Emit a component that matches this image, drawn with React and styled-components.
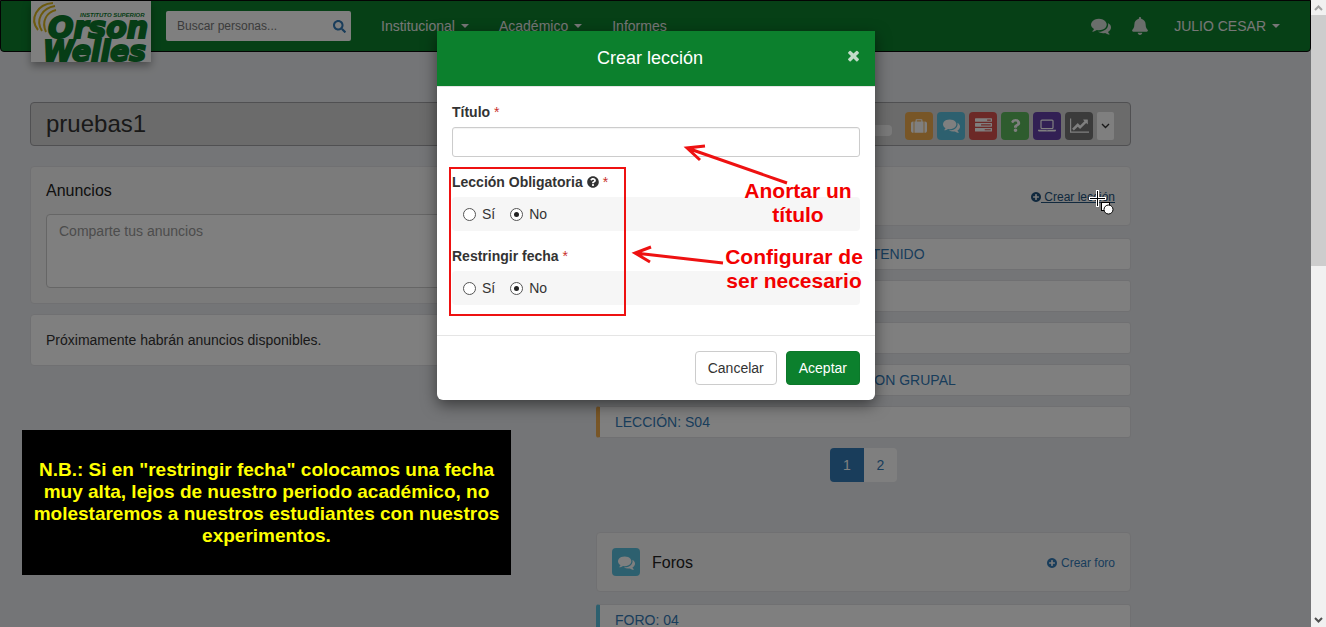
import React from "react";
import styled, { createGlobalStyle } from "styled-components";
import { FaBell, FaSearch, FaQuestion, FaQuestionCircle } from "react-icons/fa";

const GlobalStyle = createGlobalStyle`
  *, *::before, *::after { box-sizing: border-box; }
  body {
    margin: 0;
    background: #e9ebee;
    color: #333;
    font: 14px/20px "Liberation Sans", Arial, sans-serif;
  }
  button, input, textarea { font: inherit; }
  a { color: #337ab7; text-decoration: none; }
  h1, h2, h3, p, ul { margin: 0; padding: 0; }
  h1, h2, h3 { font-weight: normal; }
  ul { list-style: none; }
`;

/* ---------- icons ---------- */

const ICONS = {
  comments: {
    box: "0 0 1792 1792",
    d: "M1408 768q0 139-94 257t-256.5 186.5-353.5 68.5q-86 0-176-16-124 88-278 128-36 9-86 16h-3q-11 0-20.5-8t-11.5-21q-1-3-1-6.5t.5-6.5 2-6l2.5-5 3.5-5.5 4-5 4.5-5 4-4.5q5-6 23-25t26-29.5 22.5-29 25-38.5 20.5-44q-124-72-195-177t-71-224q0-139 94-257t256.5-186.5 353.5-68.5 353.5 68.5 256.5 186.5 94 257zm384 256q0 120-71 224.5t-195 176.5q10 24 20.5 44t25 38.5 22.5 29 26 29.5 23 25q1 1 4 4.5t4.5 5 4 5 3.5 5.5l2.5 5 2 6 .5 6.5-1 6.5q-3 14-13 22t-22 7q-50-7-86-16-154-40-278-128-90 16-176 16-271 0-472-132 58 4 88 4 161 0 309-45t264-129q125-92 192-212t67-254q0-77-23-152 129 71 204 178t75 230z",
  },
  suitcase: {
    box: "0 0 1792 1792",
    d: "M640 384h512v-128h-512v128zm-352 0v1280h-64q-92 0-158-66t-66-158v-832q0-92 66-158t158-66h64zm1120 0v1280h-1024v-1280h128v-160q0-40 28-68t68-28h576q40 0 68 28t28 68v160h128zm384 224v832q0 92-66 158t-158 66h-64v-1280h64q92 0 158 66t66 158z",
  },
  tasks: {
    box: "0 0 1792 1792",
    d: "M1024 1408h640v-128h-640v128zm-384-512h1024v-128h-1024v128zm640-512h384v-128h-384v128zm512 832v256q0 26-19 45t-45 19h-1664q-26 0-45-19t-19-45v-256q0-26 19-45t45-19h1664q26 0 45 19t19 45zm0-512v256q0 26-19 45t-45 19h-1664q-26 0-45-19t-19-45v-256q0-26 19-45t45-19h1664q26 0 45 19t19 45zm0-512v256q0 26-19 45t-45 19h-1664q-26 0-45-19t-19-45v-256q0-26 19-45t45-19h1664q26 0 45 19t19 45z",
  },
  laptop: {
    box: "0 0 1920 1792",
    d: "M416 1280q-66 0-113-47t-47-113v-704q0-66 47-113t113-47h1088q66 0 113 47t47 113v704q0 66-47 113t-113 47h-1088zm-32-864v704q0 13 9.5 22.5t22.5 9.5h1088q13 0 22.5-9.5t9.5-22.5v-704q0-13-9.5-22.5t-22.5-9.5h-1088q-13 0-22.5 9.5t-9.5 22.5zm1376 928h160v96q0 40-47 68t-113 28h-1600q-66 0-113-28t-47-68v-96h1760zm-720 96q16 0 16-16t-16-16h-160q-16 0-16 16t16 16h160z",
  },
  chart: {
    box: "0 0 2048 1792",
    d: "M2048 1536v128h-2048v-1536h128v1408h1920zm-128-1248v435q0 21-19.5 29.5t-35.5-7.5l-121-121-633 633q-10 10-23 10t-23-10l-233-233-416 416-192-192 585-585q10-10 23-10t23 10l233 233 464-464-121-121q-16-16-7.5-35.5t29.5-19.5h435q14 0 23 9t9 23z",
  },
  plus: {
    box: "0 128 1536 1536",
    d: "M1216 960v-128q0-26-19-45t-45-19h-256v-256q0-26-19-45t-45-19h-128q-26 0-45 19t-19 45v256h-256q-26 0-45 19t-19 45v128q0 26 19 45t45 19h256v256q0 26 19 45t45 19h128q26 0 45-19t19-45v-256h256q26 0 45-19t19-45zm320-64q0 209-103 385.5t-279.5 279.5-385.5 103-385.5-103-279.5-279.5-103-385.5 103-385.5 279.5-279.5 385.5-103 385.5 103 279.5 279.5 103 385.5z",
  },
  times: {
    box: "296 296 1200 1200",
    d: "M1490 1322q0 40-28 68l-136 136q-28 28-68 28t-68-28l-294-294-294 294q-28 28-68 28t-68-28l-136-136q-28-28-28-68t28-68l294-294-294-294q-28-28-28-68t28-68l136-136q28-28 68-28t68 28l294 294 294-294q28-28 68-28t68 28l136 136q28 28 28 68t-28 68l-294 294 294 294q28 28 28 68z",
  },
};

function Icon({ name, size, width }) {
  const { box, d } = ICONS[name];
  return (
    <svg width={width || size} height={size} viewBox={box} fill="currentColor" overflow="visible" aria-hidden="true">
      <path d={d} />
    </svg>
  );
}

/* ---------- window frame ---------- */

const Frame = styled.div`
  display: grid;
  grid-template-columns: minmax(0, 1fr) 15px;
  height: 100vh;
  overflow: hidden;
`;

const Screen = styled.div`
  position: relative;
  min-width: 0;
  height: 100vh;
  overflow: hidden;
`;

const Scrollbar = styled.div`
  display: flex;
  flex-direction: column;
  background: #f1f1f1;
`;

const ScrollArrow = styled.button`
  display: flex;
  align-items: center;
  justify-content: center;
  height: 15px;
  padding: 0;
  border: 0;
  background: #f1f1f1;
  color: ${(p) => (p.$muted ? "#a3a3a3" : "#505050")};
`;

const ScrollTrack = styled.div`
  flex: 1;
`;

const ScrollThumb = styled.div`
  height: 42%;
  background: #cdcdcd;
`;

/* ---------- top navigation ---------- */

const Navbar = styled.nav`
  display: flex;
  align-items: flex-start;
  height: 52px;
  padding: 0 15px 0 29px;
  border: 1px solid #080808;
  border-radius: 0 0 4px 4px;
  background: #0c802d;
`;

const LogoLink = styled.a`
  display: block;
  height: 61px;
  margin-left: 1px;
  background: #fff;
  box-shadow: 0 4px 8px rgba(0, 0, 0, 0.35);
  svg { display: block; }
`;

const SearchForm = styled.form`
  display: flex;
  align-items: center;
  width: 185px;
  height: 30px;
  margin: 10px 15px 0;
  padding: 0 5px 0 11px;
  border-radius: 2px;
  background: #fff;
`;

const SearchInput = styled.input`
  flex: 1;
  min-width: 0;
  padding: 0;
  border: 0;
  outline: 0;
  background: none;
  font-size: 12px;
  &::placeholder { color: #777; opacity: 1; }
`;

const SearchButton = styled.button`
  display: flex;
  padding: 0;
  border: 0;
  background: none;
  color: #337ab7;
`;

const Menu = styled.ul`
  display: flex;
  align-items: center;
  height: 50px;
  margin-left: ${(p) => (p.$end ? "auto" : "0")};
`;

const MenuLink = styled.a`
  display: flex;
  align-items: center;
  gap: 6px;
  padding: 0 ${(p) => (p.$icon ? 10 : 15)}px;
  color: ${(p) => (p.$icon ? "#d5dcd6" : "#eee")};
`;

const Caret = styled.span`
  border: 4px solid transparent;
  border-top-color: currentColor;
  border-bottom: 0;
`;

/* ---------- course page ---------- */

const Page = styled.main`
  max-width: 1161px;
  padding: 50px 30px 0;
`;

const CourseBar = styled.header`
  display: flex;
  align-items: center;
  gap: 4px;
  height: 44px;
  padding: 3px 16px 0 15px;
  border: 1px solid #a0a0a4;
  border-radius: 4px;
  background: #d6d6d6;
`;

const CourseTitle = styled.h1`
  flex: 1;
  padding-bottom: 3px;
  font-size: 24px;
  line-height: 26px;
`;

const Progress = styled.div`
  width: 160px;
  height: 11px;
  margin: 10px 9px 0 0;
  border-radius: 4px;
  background: #f5f5f5;
`;

const Tile = styled.button`
  display: flex;
  flex: none;
  align-items: center;
  justify-content: center;
  width: 28px;
  height: 28px;
  padding: 0;
  border: 0;
  border-radius: 4px;
  background: ${(p) => p.$color};
  color: #fff;
`;

const MoreButton = styled(Tile)`
  width: 17px;
  border-radius: 2px;
  background: #fff;
  color: #333;
`;

const Columns = styled.div`
  display: grid;
  grid-template-columns: 1fr 1fr;
  gap: 31px;
  margin-top: 20px;
`;

const Column = styled.div`
  display: flex;
  flex-direction: column;
  gap: ${(p) => p.$gap}px;
  min-width: 0;
`;

const Card = styled.section`
  padding: 15px;
  border: 1px solid #e0e1e4;
  border-radius: 4px;
  background: ${(p) => (p.$plain ? "#fff" : "#f6f6f6")};
`;

const CardTitle = styled.h2`
  flex: 1;
  color: #222;
  font-size: 16px;
  line-height: 18px;
`;

const Composer = styled.textarea`
  display: block;
  width: 100%;
  height: 74px;
  margin-top: 14px;
  padding: 6px 12px;
  border: 1px solid #ccc;
  border-radius: 4px;
  background: #fff;
  resize: none;
  &::placeholder { color: #999; opacity: 1; }
`;

const SectionHead = styled(Card)`
  display: flex;
  align-items: center;
  gap: 12px;
  height: 60px;
  ${CardTitle} { padding-top: 2px; }
`;

const CreateLink = styled.a`
  display: flex;
  align-items: center;
  gap: ${(p) => (p.$hover ? 0 : 4)}px;
  padding-top: 2px;
  font-size: 12px;
  white-space: pre;
  color: ${(p) => (p.$hover ? "#23527c" : "#337ab7")};
  span { text-decoration: ${(p) => (p.$hover ? "underline" : "none")}; }
`;

const ItemList = styled.ul`
  display: flex;
  flex-direction: column;
  gap: 10px;
`;

const Item = styled.li`
  padding: 5px 15px;
  border: 1px solid #e0e1e4;
  border-left: 4px solid ${(p) => p.$color};
  border-radius: 3px;
  background: #fff;
`;

const Pager = styled.nav`
  display: flex;
  justify-content: center;
  margin: -2px 0 38px;
`;

const PageLink = styled.a`
  width: ${(p) => (p.$active ? 34 : 33)}px;
  padding: 7px 0;
  text-align: center;
  border-radius: ${(p) => (p.$active ? "4px 0 0 4px" : "0 4px 4px 0")};
  background: ${(p) => (p.$active ? "#337ab7" : "#fff")};
  color: ${(p) => (p.$active ? "#fff" : "#337ab7")};
`;

/* ---------- dialog ---------- */

const Backdrop = styled.div`
  position: absolute;
  inset: 0;
  display: flex;
  align-items: flex-start;
  justify-content: center;
  padding: 31px 15px 0 16px;
  background: rgba(0, 0, 0, 0.5);
`;

const Dialog = styled.div`
  position: relative;
  width: 438px;
  border-radius: 0 0 6px 6px;
  background: #fff;
  box-shadow: 0 5px 15px rgba(0, 0, 0, 0.5);
`;

const DialogHead = styled.header`
  display: flex;
  align-items: flex-start;
  padding: 15px;
  border-bottom: 1px solid #e5e5e5;
  background: #0c802d;
`;

const DialogTitle = styled.h2`
  flex: 1;
  color: #fff;
  font-size: 18px;
  line-height: 25px;
  text-align: center;
`;

const CloseButton = styled.button`
  display: flex;
  align-items: center;
  height: 18px;
  padding: 0 1px 0 0;
  border: 0;
  background: none;
  color: #c2dcc9;
`;

const DialogBody = styled.form`
  display: flex;
  flex-direction: column;
  gap: 15px;
  padding: 15px 15px 30px;
`;

const Field = styled.fieldset`
  display: flex;
  flex-direction: column;
  gap: 5px;
  min-width: 0;
  margin: 0;
  padding: 0;
  border: 0;
`;

const FieldLabel = styled.label`
  display: flex;
  align-items: center;
  gap: 4px;
  font-weight: bold;
`;

const Required = styled.span`
  color: #c9302c;
  font-weight: normal;
`;

const TextInput = styled.input`
  width: 100%;
  height: 30px;
  padding: 5px 10px;
  border: 1px solid #ccc;
  border-radius: 3px;
  background: #fff;
  box-shadow: inset 0 1px 1px rgba(0, 0, 0, 0.05);
`;

const Options = styled.div`
  display: flex;
  gap: 15px;
  padding: 7px 11px;
  border-radius: 4px;
  background: #f6f6f6;
`;

const Option = styled.label`
  display: flex;
  align-items: center;
  gap: 6px;
`;

const Radio = styled.input`
  appearance: none;
  display: grid;
  place-items: center;
  width: 13px;
  height: 13px;
  margin: 0;
  border: 1px solid #555;
  border-radius: 50%;
  background: #fff;
  &:checked::before {
    content: "";
    width: 5px;
    height: 5px;
    border-radius: 50%;
    background: #222;
  }
`;

const DialogFoot = styled.footer`
  display: flex;
  justify-content: flex-end;
  gap: 9px;
  padding: 15px;
  border-top: 1px solid #e5e5e5;
`;

const Button = styled.button`
  padding: 6px 12px;
  border: 1px solid ${(p) => (p.$primary ? "#0c782a" : "#ccc")};
  border-radius: 4px;
  background: ${(p) => (p.$primary ? "#0c802d" : "#fff")};
  color: ${(p) => (p.$primary ? "#fff" : "#333")};
`;

/* ---------- tutorial marks over the dialog and page ---------- */

const MarkFrame = styled.div`
  position: absolute;
  left: 12px;
  top: 136px;
  width: 177px;
  height: 149px;
  border: 2px solid #ee1111;
`;

const MarkText = styled.p`
  position: absolute;
  left: ${(p) => p.$x}px;
  top: ${(p) => p.$y}px;
  width: 144px;
  color: #f20000;
  font-size: 21px;
  font-weight: bold;
  line-height: 24px;
  text-align: center;
`;

const MarkArrows = styled.svg`
  position: absolute;
  left: 0;
  top: 0;
  pointer-events: none;
`;

const NoteBox = styled.aside`
  position: absolute;
  left: 22px;
  top: 430px;
  display: flex;
  align-items: center;
  justify-content: center;
  width: 489px;
  height: 145px;
  background: #000;
  color: #ff0;
  font-size: 19px;
  font-weight: bold;
  line-height: 22px;
  text-align: center;
  white-space: nowrap;
`;

const Pointer = styled.svg`
  position: absolute;
  left: 1088px;
  top: 189px;
`;

/* ---------- parts ---------- */

function Logo() {
  return (
    <svg width="120" height="61" viewBox="0 0 120 61" overflow="visible" role="img" aria-label="Instituto Superior Orson Welles">
      <g fill="none" stroke="#d9b51c" strokeWidth="2">
        <path d="M22 2C6 3 -2 18 7 29" />
        <path d="M24 5C11 7 4 19 11 30" />
        <path d="M25 9C16 11 10 20 15 31" />
      </g>
      <g fill="#0c7a2d" stroke="#0c7a2d" fontStyle="italic" fontWeight="bold">
        <text x="49" y="16" fontSize="6" strokeWidth="0" fontFamily="'Liberation Sans', Arial, sans-serif">
          INSTITUTO SUPERIOR
        </text>
        <text x="17" y="37" fontSize="30" strokeWidth="2" fontFamily="'DejaVu Sans', sans-serif">Orson</text>
        <text x="12" y="60" fontSize="28" strokeWidth="2" fontFamily="'DejaVu Sans', sans-serif">Welles</text>
      </g>
    </svg>
  );
}

const TILES = [
  { label: "Lecciones", color: "#f0ad4e", icon: <Icon name="suitcase" size={16} /> },
  { label: "Foros", color: "#5bc0de", icon: <Icon name="comments" size={17} /> },
  { label: "Tareas", color: "#d9534f", icon: <Icon name="tasks" size={17} /> },
  { label: "Evaluaciones", color: "#5cb85c", icon: <FaQuestion size={13} /> },
  { label: "Clases virtuales", color: "#6540a8", icon: <Icon name="laptop" size={17} width={18} /> },
  { label: "Estadísticas", color: "#777", icon: <Icon name="chart" size={17} width={19} /> },
];

const LESSONS = [
  "LECCIÓN: 1 PRESENTACIÓN DEL CONTENIDO",
  "LECCIÓN: S01",
  "LECCIÓN: S02",
  "LECCIÓN: S03 TRABAJO: PRESENTACION GRUPAL",
  "LECCIÓN: S04",
];

function YesNo({ name }) {
  return (
    <Options>
      <Option><Radio type="radio" name={name} value="si" />Sí</Option>
      <Option><Radio type="radio" name={name} value="no" defaultChecked />No</Option>
    </Options>
  );
}

function LessonDialog() {
  return (
    <Dialog role="dialog" aria-labelledby="dialog-title">
      <DialogHead>
        <DialogTitle id="dialog-title">Crear lección</DialogTitle>
        <CloseButton aria-label="Cerrar"><Icon name="times" size={11} /></CloseButton>
      </DialogHead>
      <DialogBody>
        <Field>
          <FieldLabel htmlFor="titulo">Título <Required>*</Required></FieldLabel>
          <TextInput id="titulo" type="text" />
        </Field>
        <Field aria-labelledby="obligatoria-label">
          <FieldLabel as="span" id="obligatoria-label">
            Lección Obligatoria <FaQuestionCircle size={12} /> <Required>*</Required>
          </FieldLabel>
          <YesNo name="obligatoria" />
        </Field>
        <Field aria-labelledby="restringir-label">
          <FieldLabel as="span" id="restringir-label">Restringir fecha <Required>*</Required></FieldLabel>
          <YesNo name="restringir" />
        </Field>
      </DialogBody>
      <DialogFoot>
        <Button type="button">Cancelar</Button>
        <Button type="button" $primary>Aceptar</Button>
      </DialogFoot>

      <MarkFrame />
      <MarkArrows width="438" height="369" fill="none" stroke="#ee1111" strokeWidth="3">
        <path d="M350 152L250 117M268 115L250 117L263 129" />
        <path d="M286 232L198 222M214 216L198 222L213 231" />
      </MarkArrows>
      <MarkText $x={289} $y={148}>Anortar un<br />título</MarkText>
      <MarkText $x={285} $y={214}>Configurar de<br />ser necesario</MarkText>
    </Dialog>
  );
}

export default function App() {
  return (
    <Frame>
      <GlobalStyle />
      <Screen>
        <Navbar>
          <LogoLink href="#"><Logo /></LogoLink>
          <SearchForm>
            <SearchInput type="search" aria-label="Buscar personas" placeholder="Buscar personas..." />
            <SearchButton type="button" aria-label="Buscar"><FaSearch size={13} /></SearchButton>
          </SearchForm>
          <Menu>
            <li><MenuLink href="#">Institucional<Caret /></MenuLink></li>
            <li><MenuLink href="#">Académico<Caret /></MenuLink></li>
            <li><MenuLink href="#">Informes</MenuLink></li>
          </Menu>
          <Menu $end>
            <li><MenuLink href="#" $icon aria-label="Mensajes"><Icon name="comments" size={20} /></MenuLink></li>
            <li><MenuLink href="#" $icon aria-label="Avisos"><FaBell size={18} /></MenuLink></li>
            <li><MenuLink href="#">JULIO CESAR<Caret /></MenuLink></li>
          </Menu>
        </Navbar>

        <Page>
          <CourseBar>
            <CourseTitle>pruebas1</CourseTitle>
            <Progress />
            {TILES.map((t) => (
              <Tile key={t.label} $color={t.color} aria-label={t.label}>{t.icon}</Tile>
            ))}
            <MoreButton aria-label="Más opciones">
              <svg width="9" height="6" viewBox="0 0 9 6" fill="none" stroke="currentColor" strokeWidth="1.4">
                <path d="M1 1L4.500 4.500L8 1" />
              </svg>
            </MoreButton>
          </CourseBar>

          <Columns>
            <Column $gap={10}>
              <Card>
                <CardTitle>Anuncios</CardTitle>
                <Composer aria-label="Anuncio" placeholder="Comparte tus anuncios" />
              </Card>
              <Card $plain>
                <p>Próximamente habrán anuncios disponibles.</p>
              </Card>
            </Column>

            <Column $gap={12}>
              <SectionHead>
                <Tile $color="#f0ad4e" aria-label="Lecciones"><Icon name="suitcase" size={16} /></Tile>
                <CardTitle>Lecciones</CardTitle>
                <CreateLink href="#" $hover><Icon name="plus" size={10} /><span> Crear lección</span></CreateLink>
              </SectionHead>
              <ItemList>
                {LESSONS.map((text) => (
                  <Item key={text} $color="#f0ad4e"><a href="#">{text}</a></Item>
                ))}
              </ItemList>
              <Pager aria-label="Páginas">
                <PageLink href="#" $active>1</PageLink>
                <PageLink href="#">2</PageLink>
              </Pager>
              <SectionHead>
                <Tile $color="#5bc0de" aria-label="Foros"><Icon name="comments" size={17} /></Tile>
                <CardTitle>Foros</CardTitle>
                <CreateLink href="#"><Icon name="plus" size={10} /><span>Crear foro</span></CreateLink>
              </SectionHead>
              <ItemList>
                <Item $color="#5bc0de"><a href="#">FORO: 04</a></Item>
              </ItemList>
            </Column>
          </Columns>
        </Page>

        <Backdrop>
          <LessonDialog />
        </Backdrop>

        <NoteBox>
          <p>
            N.B.: Si en "restringir fecha" colocamos una fecha<br />
            muy alta, lejos de nuestro periodo académico, no<br />
            molestaremos a nuestros estudiantes con nuestros<br />
            experimentos.
          </p>
        </NoteBox>

        <Pointer width="26" height="28" viewBox="0 0 26 28" aria-hidden="true">
          <path d="M9.500 1V18M1 9.500H18" stroke="#fff" strokeWidth="3" />
          <path d="M9.500 2V17M2 9.500H17" stroke="#000" strokeWidth="1" />
          <rect x="13.500" y="13.500" width="8" height="8" fill="#fff" stroke="#000" />
          <circle cx="20.500" cy="20.500" r="4.500" fill="#fff" stroke="#000" />
        </Pointer>
      </Screen>

      <Scrollbar>
        <ScrollArrow $muted aria-label="Subir">
          <svg width="9" height="6" viewBox="0 0 9 6" fill="none" stroke="currentColor" strokeWidth="2">
            <path d="M1 5L4.500 1.500L8 5" />
          </svg>
        </ScrollArrow>
        <ScrollTrack><ScrollThumb /></ScrollTrack>
        <ScrollArrow aria-label="Bajar">
          <svg width="9" height="6" viewBox="0 0 9 6" fill="none" stroke="currentColor" strokeWidth="2">
            <path d="M1 1L4.500 4.500L8 1" />
          </svg>
        </ScrollArrow>
      </Scrollbar>
    </Frame>
  );
}
